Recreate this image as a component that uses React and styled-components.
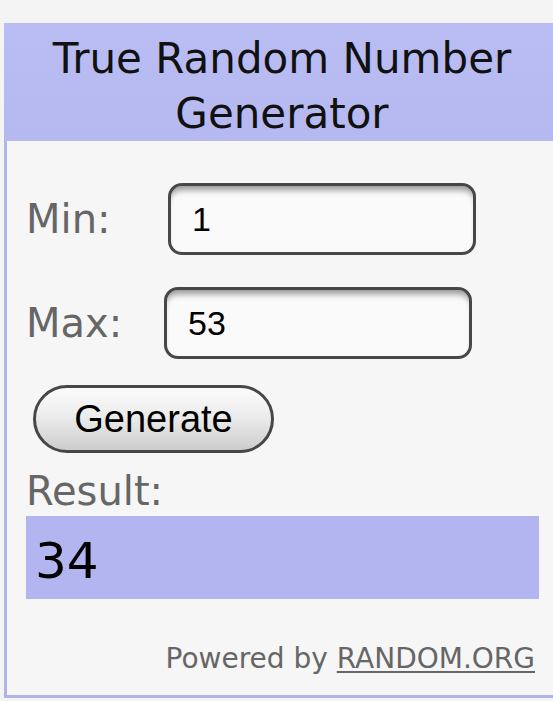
import React from "react";
import styled, { createGlobalStyle } from "styled-components";

const Global = createGlobalStyle`
  html, body { margin: 0; padding: 0; background: #f4f4f4; overflow: hidden; }
  body { font-family: "DejaVu Sans", Verdana, sans-serif; }
`;

const Page = styled.div`
  width: 553px;
  height: 701px;
  overflow: hidden;
  padding-top: 23px;
  padding-left: 4px;
  box-sizing: border-box;
`;

const Widget = styled.div`
  width: 556px;
  box-sizing: border-box;
  border: 3px solid #b0b4ea;
  border-top: none;
  background: #f6f6f6;
  display: flex;
  flex-direction: column;
`;

const Header = styled.div`
  background: linear-gradient(#babdf3, #b6b9f0);
  margin-left: -3px;
  padding: 8px 0 0 3px;
  text-align: center;
  font-family: "DejaVu Sans", Verdana, sans-serif;
  font-size: 42px;
  line-height: 55px;
  color: #111;
  height: 118px;
  box-sizing: border-box;
`;

const Body = styled.div`
  display: flex;
  flex-direction: column;
  padding: 0 22px 20px 19px;
`;

const Row = styled.div`
  display: flex;
  align-items: center;
  height: 72px;
  margin-top: ${(p) => p.$top}px;
`;

const Label = styled.div`
  font-family: "DejaVu Sans", Verdana, sans-serif;
  font-size: 40px;
  color: #666;
  width: ${(p) => p.$width}px;
  flex: none;
  line-height: 46px;
`;

const Field = styled.div`
  width: 308px;
  height: 72px;
  box-sizing: border-box;
  border: 3px solid #474747;
  border-radius: 14px;
  background: #fafafa;
  box-shadow: inset 0 8px 6px -4px rgba(0, 0, 0, 0.4);
  display: flex;
  align-items: center;
  padding-left: 21px;
  font-family: "Liberation Sans", Arial, sans-serif;
  font-size: 34px;
  color: #000;
`;

const Button = styled.div`
  margin-top: 26px;
  margin-left: 7px;
  width: 241px;
  height: 68px;
  box-sizing: border-box;
  border: 3px solid #474747;
  border-radius: 34px;
  background: linear-gradient(#fbfbfb 0%, #ececec 45%, #cdcdcd 100%);
  display: flex;
  align-items: center;
  justify-content: center;
  font-family: "Liberation Sans", Arial, sans-serif;
  font-size: 38px;
  color: #000;
`;

const ResultLabel = styled.div`
  margin-top: 15px;
  font-size: 40px;
  line-height: 46px;
  color: #666;
`;

const ResultBox = styled.div`
  margin-top: 2px;
  width: 513px;
  height: 83px;
  box-sizing: border-box;
  background: #b3b5f1;
  padding: 10px 0 0 9px;
  font-size: 50px;
  line-height: 70px;
  color: #000;
`;

const Footer = styled.div`
  margin-top: 44px;
  text-align: right;
  font-size: 28px;
  line-height: 32px;
  color: #666;
`;

const Link = styled.span`
  text-decoration: underline;
  text-decoration-thickness: 2px;
  text-underline-offset: 3px;
`;

export default function App() {
  return (
    <>
      <Global />
      <Page>
        <Widget>
          <Header>
            True Random Number
            <br />
            Generator
          </Header>
          <Body>
            <Row $top={42}>
              <Label $width={142}>Min:</Label>
              <Field>1</Field>
            </Row>
            <Row $top={32}>
              <Label $width={138}>Max:</Label>
              <Field>53</Field>
            </Row>
            <Button>Generate</Button>
            <ResultLabel>Result:</ResultLabel>
            <ResultBox>34</ResultBox>
            <Footer>
              Powered by <Link>RANDOM.ORG</Link>
            </Footer>
          </Body>
        </Widget>
      </Page>
    </>
  );
}
